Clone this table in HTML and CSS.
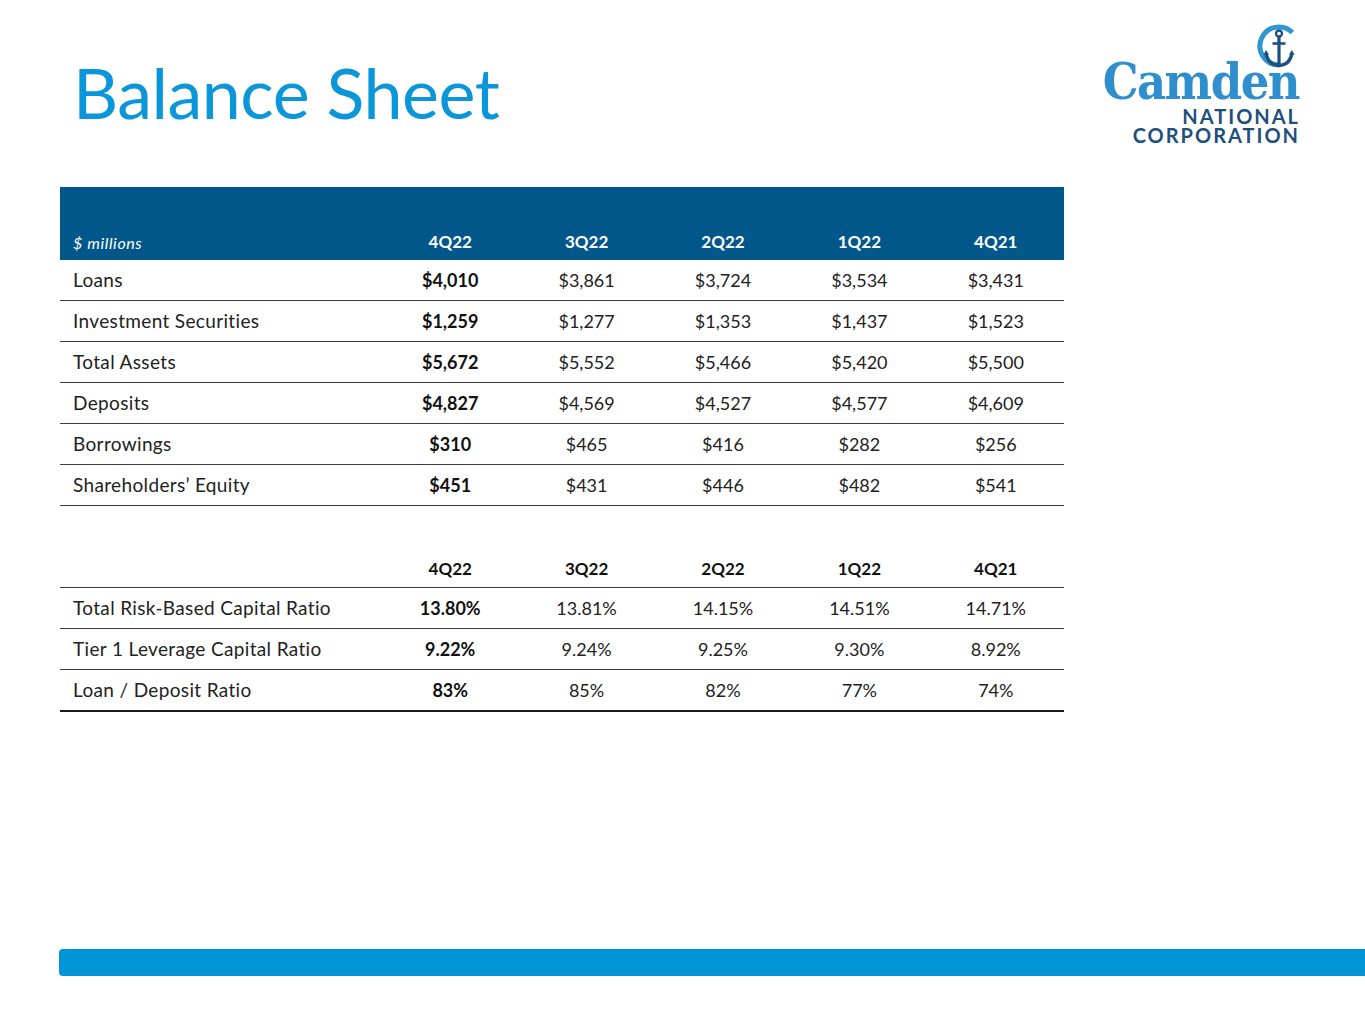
FILE: index.html
```html
<!DOCTYPE html>
<html>
<head>
<meta charset="utf-8">
<link rel="stylesheet" href="styles.css">
</head>
<body>
<div class="page">
  <header class="top">
    <h1 class="title">Balance Sheet</h1>
    <div class="logo">
      <svg class="anchor" viewBox="0 0 44 46" width="44" height="46">
        <path d="M35.4 8.6 A19 19 0 1 0 22 41" fill="none" stroke="#3096d2" stroke-width="5"/>
        <circle cx="22" cy="9.5" r="3" fill="none" stroke="#1d4f80" stroke-width="2.3"/>
        <line x1="22" y1="12.5" x2="22" y2="40" stroke="#1d4f80" stroke-width="3.2"/>
        <line x1="15.5" y1="19.5" x2="28.5" y2="19.5" stroke="#1d4f80" stroke-width="2.6"/>
        <path d="M9 29 Q11 41 22 41.5 Q33 41 35 29" fill="none" stroke="#1d4f80" stroke-width="3.4"/>
        <path d="M6.5 31 L9 26 L12 30.5 Z M37.5 31 L35 26 L32 30.5 Z" fill="#1d4f80"/>
      </svg>
      <div class="camden">Camden</div>
      <div class="sub">NATIONAL</div>
      <div class="sub">CORPORATION</div>
    </div>
  </header>

  <table class="sheet">
    <colgroup>
      <col class="c-label"><col class="c-num"><col class="c-num"><col class="c-num"><col class="c-num"><col class="c-num">
    </colgroup>
    <thead>
      <tr class="band">
        <th class="lab"><em>$ millions</em></th>
        <th>4Q22</th><th>3Q22</th><th>2Q22</th><th>1Q22</th><th>4Q21</th>
      </tr>
    </thead>
    <tbody>
      <tr><td class="lab">Loans</td><td class="cur">$4,010</td><td>$3,861</td><td>$3,724</td><td>$3,534</td><td>$3,431</td></tr>
      <tr><td class="lab">Investment Securities</td><td class="cur">$1,259</td><td>$1,277</td><td>$1,353</td><td>$1,437</td><td>$1,523</td></tr>
      <tr><td class="lab">Total Assets</td><td class="cur">$5,672</td><td>$5,552</td><td>$5,466</td><td>$5,420</td><td>$5,500</td></tr>
      <tr><td class="lab">Deposits</td><td class="cur">$4,827</td><td>$4,569</td><td>$4,527</td><td>$4,577</td><td>$4,609</td></tr>
      <tr><td class="lab">Borrowings</td><td class="cur">$310</td><td>$465</td><td>$416</td><td>$282</td><td>$256</td></tr>
      <tr><td class="lab">Shareholders’ Equity</td><td class="cur">$451</td><td>$431</td><td>$446</td><td>$482</td><td>$541</td></tr>
      <tr class="subhead">
        <td class="lab"></td><td>4Q22</td><td>3Q22</td><td>2Q22</td><td>1Q22</td><td>4Q21</td>
      </tr>
      <tr><td class="lab">Total Risk-Based Capital Ratio</td><td class="cur">13.80%</td><td>13.81%</td><td>14.15%</td><td>14.51%</td><td>14.71%</td></tr>
      <tr><td class="lab">Tier 1 Leverage Capital Ratio</td><td class="cur">9.22%</td><td>9.24%</td><td>9.25%</td><td>9.30%</td><td>8.92%</td></tr>
      <tr class="last"><td class="lab">Loan / Deposit Ratio</td><td class="cur">83%</td><td>85%</td><td>82%</td><td>77%</td><td>74%</td></tr>
    </tbody>
  </table>

  <div class="bar"></div>
</div>
</body>
</html>
```

FILE: styles.css
```css
html, body {
  margin: 0;
  padding: 0;
  background: #ffffff;
}

.page {
  width: 1365px;
  height: 1024px;
  display: flex;
  flex-direction: column;
  font-family: "Lato", "Open Sans", sans-serif;
  color: #222222;
}

.top {
  display: flex;
  justify-content: space-between;
  align-items: flex-start;
  height: 187px;
  box-sizing: border-box;
  padding: 24px 67px 0 73px;
}

.title {
  margin: 33px 0 0 0;
  font-family: "Lato", sans-serif;
  font-weight: 400;
  font-size: 70px;
  line-height: 1;
  color: #0a96d9;
  letter-spacing: -0.5px;
}

.logo {
  display: flex;
  flex-direction: column;
  align-items: flex-end;
}

.anchor {
  display: block;
  margin-right: -3px;
  margin-bottom: -13px;
}

.camden {
  font-family: "DejaVu Serif Condensed", "DejaVu Serif", serif;
  font-weight: bold;
  font-size: 50px;
  line-height: 50px;
  color: #2f8fcd;
  letter-spacing: -1.5px;
  margin-right: -1px;
}

.sub {
  font-family: "Lato", sans-serif;
  font-weight: 700;
  font-size: 20px;
  line-height: 19px;
  letter-spacing: 2px;
  color: #1f4f7d;
  margin-right: -2px;
}

.sheet {
  margin-left: 60px;
  width: 1004px;
  border-collapse: collapse;
  table-layout: fixed;
  font-size: 18px;
}

.c-label { width: 322px; }
.c-num { width: 136.4px; }

.sheet th, .sheet td {
  padding: 0;
  text-align: center;
  font-weight: 400;
}

.sheet .lab {
  text-align: left;
  padding-left: 13px;
}

.sheet td.lab {
  font-size: 19px;
  letter-spacing: 0.35px;
}

.band {
  background: #02578a;
  color: #ffffff;
  height: 73px;
}

.band th {
  vertical-align: bottom;
  padding-bottom: 8px;
  font-weight: 700;
  font-size: 17px;
}

.band th.lab {
  font-size: 16px;
  font-weight: 400;
  letter-spacing: 0.6px;
}

.sheet tbody td {
  height: 40px;
  border-bottom: 1px solid #3c3c3c;
  line-height: 40px;
}

.sheet td.cur {
  color: #111111;
  font-weight: 700;
  font-size: 18px;
}

.sheet tbody tr.subhead td {
  height: 81px;
  vertical-align: bottom;
  line-height: 36px;
  font-weight: 700;
  font-size: 17px;
  color: #111111;
}

.sheet tbody tr.last td {
  border-bottom: 2px solid #1a1a1a;
}

.bar {
  margin-top: auto;
  margin-bottom: 48px;
  margin-left: 59px;
  height: 27px;
  background: #0095d9;
  border-radius: 4px 0 0 4px;
}
```
